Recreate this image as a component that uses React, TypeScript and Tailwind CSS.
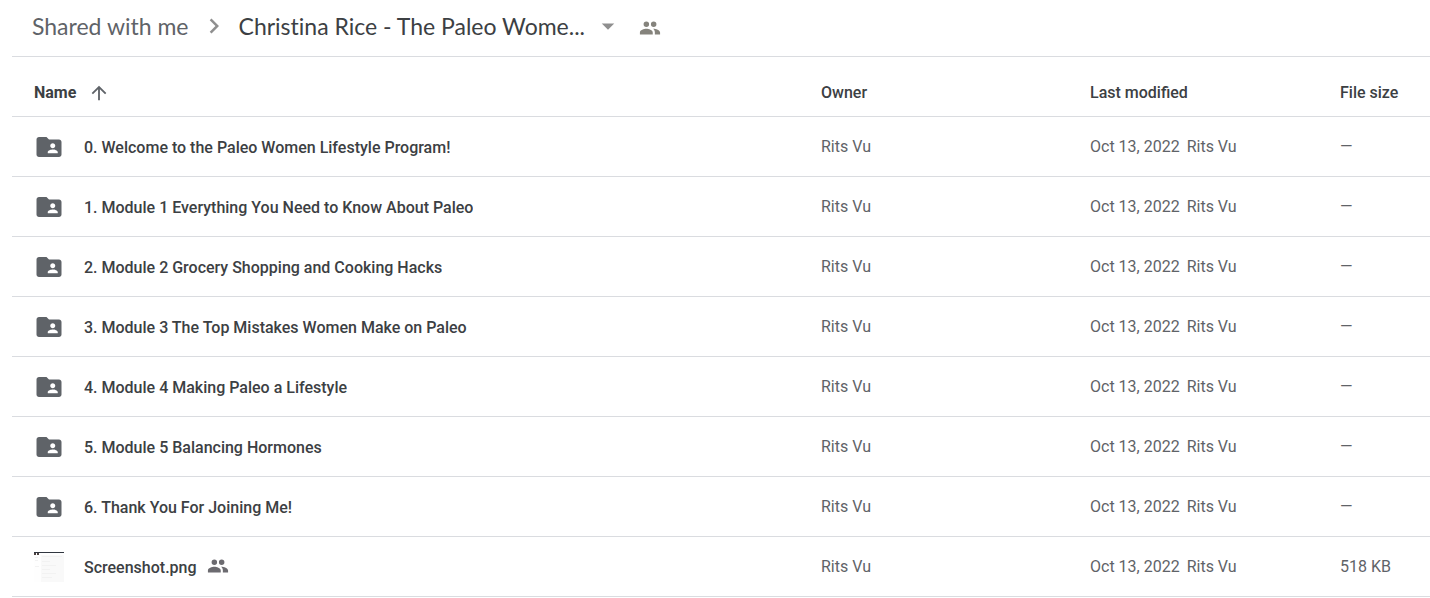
import React from 'react';

const OWNER = 'Rits Vu';
const MODIFIED = 'Oct 13, 2022';

type Item = { name: string; kind: 'folder' | 'image'; size: string };

const items: Item[] = [
  { name: '0. Welcome to the Paleo Women Lifestyle Program!', kind: 'folder', size: '—' },
  { name: '1. Module 1 Everything You Need to Know About Paleo', kind: 'folder', size: '—' },
  { name: '2. Module 2 Grocery Shopping and Cooking Hacks', kind: 'folder', size: '—' },
  { name: '3. Module 3 The Top Mistakes Women Make on Paleo', kind: 'folder', size: '—' },
  { name: '4. Module 4 Making Paleo a Lifestyle', kind: 'folder', size: '—' },
  { name: '5. Module 5 Balancing Hormones', kind: 'folder', size: '—' },
  { name: '6. Thank You For Joining Me!', kind: 'folder', size: '—' },
  { name: 'Screenshot.png', kind: 'image', size: '518 KB' },
];

function Icon({ d, className }: { d: string; className: string }) {
  return (
    <svg viewBox="0 0 24 24" fill="currentColor" aria-hidden="true" className={`shrink-0 ${className}`}>
      <path d={d} />
    </svg>
  );
}

const CHEVRON = 'M10 6 8.59 7.41 13.17 12l-4.58 4.59L10 18l6-6z';
const CARET = 'M7 10l5 5 5-5z';
const ARROW_UP = 'M4 12l1.41 1.41L11 7.83V20h2V7.83l5.58 5.59L20 12l-8-8-8 8z';
const FOLDER_SHARED =
  'M20 6h-8l-2-2H4c-1.1 0-1.99.9-1.99 2L2 18c0 1.1.9 2 2 2h16c1.1 0 2-.9 2-2V8c0-1.1-.9-2-2-2zm-5 3c1.1 0 2 .9 2 2s-.9 2-2 2-2-.9-2-2 .9-2 2-2zm4 8h-8v-1c0-1.33 2.67-2 4-2s4 .67 4 2v1z';
const PEOPLE =
  'M8 11a3 3 0 1 0 0-6 3 3 0 0 0 0 6zM16 11a3 3 0 1 0 0-6 3 3 0 0 0 0 6zM8 12.700c-2.500 0-7 1.300-7 4.100V19h14v-2.200c0-2.800-4.500-4.100-7-4.100zM15.300 12.700C16.800 13.700 17.300 15.200 17.300 16.800V19H23v-2.200c0-2.600-4.400-4-7.700-4.100z';

function Thumbnail() {
  return (
    <svg viewBox="0 0 30 30" aria-hidden="true" className="size-[30px]">
      <path fill="#fefefe" d="M0 0h30v30H0z" />
      <path fill="#f9f9f9" d="M7 3h23v27H7z" />
      <path fill="#30363f" d="M0 0h30v1H0z" />
      <path fill="#4b4040" d="M0 1h2v2H0zM3 1h2v2H3z" />
      <path stroke="#f2f2f2" d="M8 4.500h20M8 9.500h8M8 13.500h14M8 17.500h8M8 21.500h14M8 25.500h10M1 5.500h3M1 8.500h3M1 14.500h4" />
    </svg>
  );
}

export default function App() {
  return (
    <main className="bg-white pl-3 font-['Roboto',sans-serif] text-base text-[#5f6368]">
      <nav
        aria-label="Breadcrumb"
        className="flex h-14 items-center pb-1 pl-5 font-['Lato',sans-serif] text-[23px] leading-7 [font-variant-ligatures:none]"
      >
        <a href="#shared" className="pb-px">Shared with me</a>
        <Icon d={CHEVRON} className="mx-[10px] size-[30px] text-[#8f8f8f]" />
        <button type="button" className="flex items-center gap-2 text-[#3c4043]">
          <span className="pb-px">Christina Rice - The Paleo Wome...</span>
          <Icon d={CARET} className="size-[30px] text-[#8f8f8f]" />
        </button>
        <button type="button" aria-label="Shared" className="ml-4 pt-1 text-[#85837c]">
          <Icon d={PEOPLE} className="size-[22px]" />
        </button>
      </nav>
      <table className="w-full table-fixed border-collapse border-t border-[#dadce0] text-left">
        <colgroup>
          <col />
          <col className="w-[269px]" />
          <col className="w-[250px]" />
          <col className="w-[90px]" />
        </colgroup>
        <thead>
          <tr className="h-[60px] border-b border-[#dadce0] text-[#3c4043]">
            <th scope="col" className="pt-3 pl-[22px]" aria-sort="ascending">
              <button type="button" className="flex items-center gap-3 font-bold">
                Name
                <Icon d={ARROW_UP} className="size-[22px] text-[#5f6368]" />
              </button>
            </th>
            <th scope="col" className="pt-3 font-medium">Owner</th>
            <th scope="col" className="pt-3 font-medium">Last modified</th>
            <th scope="col" className="pt-3 font-medium">File size</th>
          </tr>
        </thead>
        <tbody>
          {items.map((item) => (
            <tr key={item.name} className="h-[60px] border-b border-[#dadce0]">
              <td className="pl-[22px]">
                <div className="flex items-center">
                  <span className="flex w-[50px]">
                    {item.kind === 'folder' ? <Icon d={FOLDER_SHARED} className="size-[30px]" /> : <Thumbnail />}
                  </span>
                  <a href="#open" className="truncate pt-0.5 font-medium text-[#3c4043]">{item.name}</a>
                  {item.kind === 'image' && <Icon d={PEOPLE} className="mb-0.5 ml-[10px] size-[22px] text-[#6c6b70]" />}
                </div>
              </td>
              <td>{OWNER}</td>
              <td>
                <span className="mr-[7px]">{MODIFIED}</span>
                <span>{OWNER}</span>
              </td>
              <td>{item.size}</td>
            </tr>
          ))}
        </tbody>
      </table>
    </main>
  );
}
